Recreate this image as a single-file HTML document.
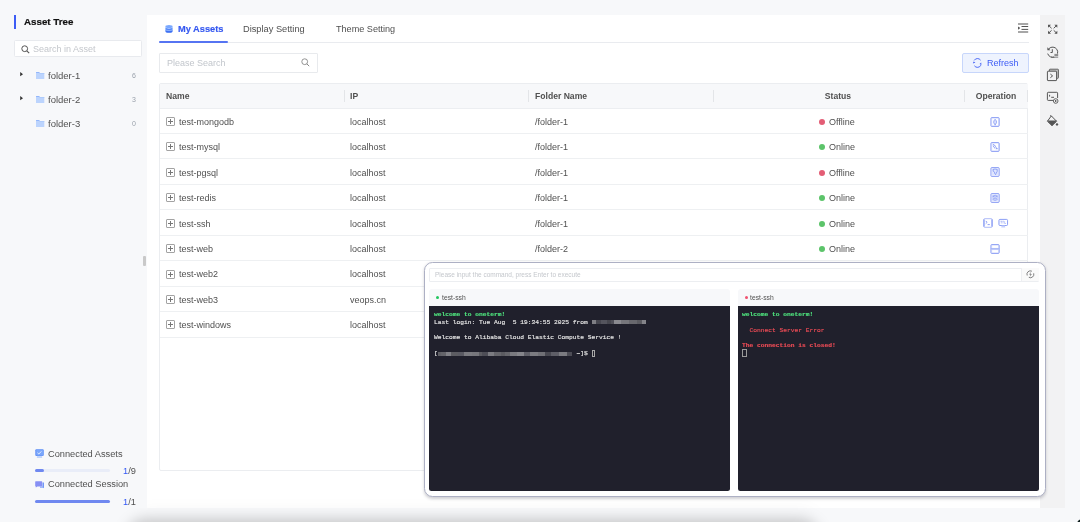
<!DOCTYPE html>
<html><head><meta charset="utf-8"><style>
*{margin:0;padding:0;box-sizing:border-box}
html,body{width:1080px;height:522px;overflow:hidden}
body{background:#f7f8fa;font-family:"Liberation Sans",sans-serif;position:relative;color:#505050;-webkit-font-smoothing:antialiased}
.a{position:absolute}
.t{position:absolute;white-space:nowrap;line-height:12px;will-change:transform}
svg{position:absolute;overflow:visible}
.term{position:absolute;font-family:"Liberation Mono",monospace;font-size:6.25px;line-height:7.95px;white-space:pre;color:#e6e6e6;-webkit-text-stroke:0.15px currentColor;will-change:transform}
</style></head><body>
<div class="a" style="left:14px;top:15px;width:2px;height:14px;background:#3d5cf5"></div>
<div class="t" style="left:23.60px;top:15.92px;font-size:9.75px;color:#111;font-weight:bold;-webkit-text-stroke:0.2px #111;">Asset Tree</div>
<div class="a" style="left:13.7px;top:40px;width:127.9px;height:16.6px;background:#fff;border:1px solid #e8eaee;border-radius:1.5px"></div>
<svg style="left:21px;top:44.6px" width="9" height="9" viewBox="0 0 9 9"><circle cx="3.7" cy="3.7" r="2.9" fill="none" stroke="#555" stroke-width="1"/><path d="M5.8 5.8L8.2 8.2" stroke="#555" stroke-width="1.1"/></svg>
<div class="t" style="left:33.10px;top:42.68px;font-size:9px;color:#c4c7cc;">Search in Asset</div>
<svg style="left:19.6px;top:72.00px" width="4" height="5" viewBox="0 0 4 5"><path d="M0.2 0.1L3 2.2L0.2 4.3Z" fill="#333"/></svg>
<svg style="left:35.6px;top:72.20px" width="9" height="8" viewBox="0 0 9 8"><rect x="0" y="0" width="3.6" height="1.4" rx="0.3" fill="#92b6fb"/><path d="M0 0.9H8.3V7Q8.3 7 8 7H0.3Q0 7 0 6.7Z" fill="#bcd4fd"/><rect x="3.4" y="1" width="4.9" height="0.8" fill="#aac8fb"/></svg>
<div class="t" style="left:47.60px;top:69.71px;font-size:9.5px;color:#505050;">folder-1</div>
<div class="t" style="right:944.20px;top:69.97px;font-size:7px;color:#9aa1ab;">6</div>
<svg style="left:19.6px;top:96.05px" width="4" height="5" viewBox="0 0 4 5"><path d="M0.2 0.1L3 2.2L0.2 4.3Z" fill="#333"/></svg>
<svg style="left:35.6px;top:96.25px" width="9" height="8" viewBox="0 0 9 8"><rect x="0" y="0" width="3.6" height="1.4" rx="0.3" fill="#92b6fb"/><path d="M0 0.9H8.3V7Q8.3 7 8 7H0.3Q0 7 0 6.7Z" fill="#bcd4fd"/><rect x="3.4" y="1" width="4.9" height="0.8" fill="#aac8fb"/></svg>
<div class="t" style="left:47.60px;top:93.76px;font-size:9.5px;color:#505050;">folder-2</div>
<div class="t" style="right:944.20px;top:94.02px;font-size:7px;color:#9aa1ab;">3</div>
<svg style="left:35.6px;top:120.30px" width="9" height="8" viewBox="0 0 9 8"><rect x="0" y="0" width="3.6" height="1.4" rx="0.3" fill="#92b6fb"/><path d="M0 0.9H8.3V7Q8.3 7 8 7H0.3Q0 7 0 6.7Z" fill="#bcd4fd"/><rect x="3.4" y="1" width="4.9" height="0.8" fill="#aac8fb"/></svg>
<div class="t" style="left:47.60px;top:117.81px;font-size:9.5px;color:#505050;">folder-3</div>
<div class="t" style="right:944.20px;top:118.07px;font-size:7px;color:#9aa1ab;">0</div>
<svg style="left:35px;top:449px" width="9" height="9" viewBox="0 0 9 9"><rect x="0.3" y="0.3" width="8.4" height="6.6" rx="1" fill="#5f8ef5"/><rect x="1.2" y="0.8" width="7.5" height="5.6" rx="0.8" fill="#7aa6fb"/><path d="M2.5 3.8L3.8 5L6.3 2.4" fill="none" stroke="#fff" stroke-width="0.8"/><rect x="1.8" y="7.4" width="5.4" height="1.2" rx="0.5" fill="#8fb1f8"/></svg>
<div class="t" style="left:48.40px;top:447.59px;font-size:9.25px;color:#505050;">Connected Assets</div>
<div class="a" style="left:35.3px;top:469.2px;width:75.2px;height:3px;background:#e9edf8;border-radius:2px"></div>
<div class="a" style="left:35.3px;top:469.2px;width:8.5px;height:3px;background:#6f88f0;border-radius:2px"></div>
<div class="t" style="right:944.50px;top:464.79px;font-size:9.25px;color:#505050;"><span style="color:#3358f5">1</span>/9</div>
<svg style="left:35px;top:480.5px" width="9" height="8" viewBox="0 0 9 8"><path d="M0.2 0.8Q0.2 0.2 0.8 0.2H6.6Q7.2 0.2 7.2 0.8V4.8Q7.2 5.4 6.6 5.4H2.4L0.8 6.6V5.4Q0.2 5.4 0.2 4.8Z" fill="#8790f4"/><path d="M7.6 1.6H8.8V7.2L7.8 6.4H5V5.8H7.6Z" fill="#4f7ef5"/></svg><div class="t" style="left:48.40px;top:477.99px;font-size:9.25px;color:#505050;">Connected Session</div>
<div class="a" style="left:35.3px;top:499.6px;width:75.2px;height:3.2px;background:#6f88f0;border-radius:2px"></div>
<div class="t" style="right:944.50px;top:495.59px;font-size:9.25px;color:#505050;"><span style="color:#3358f5">1</span>/1</div>
<div class="a" style="left:143px;top:256px;width:3px;height:10px;background:#c9c9c9;border-radius:1px"></div>
<div class="a" style="left:147px;top:15px;width:893px;height:493px;background:#fff"></div>
<div class="a" style="left:1040px;top:15px;width:25px;height:493px;background:#f2f2f3"></div>
<svg style="left:164.8px;top:24.8px" width="8" height="8" viewBox="0 0 8 8"><defs><linearGradient id="g1" x1="0" y1="0" x2="0" y2="1"><stop offset="0" stop-color="#6ea2ff"/><stop offset="1" stop-color="#2f63f0"/></linearGradient></defs><ellipse cx="4" cy="1.6" rx="3.6" ry="1.5" fill="#79a8ff"/><path d="M0.4 1.8V6.2Q0.4 7.8 4 7.8Q7.6 7.8 7.6 6.2V1.8Q7.6 3.4 4 3.4Q0.4 3.4 0.4 1.8Z" fill="url(#g1)"/><path d="M0.4 4.2Q0.4 5.6 4 5.6Q7.6 5.6 7.6 4.2" fill="none" stroke="#b9d3ff" stroke-width="0.6"/></svg>
<div class="t" style="left:177.90px;top:22.79px;font-size:9.25px;color:#3558f0;font-weight:bold;-webkit-text-stroke:0.15px #3558f0;">My Assets</div>
<div class="t" style="left:243.30px;top:23.09px;font-size:9.25px;color:#505050;">Display Setting</div>
<div class="t" style="left:335.70px;top:23.15px;font-size:9.1px;color:#505050;">Theme Setting</div>
<div class="a" style="left:159px;top:42px;width:869.5px;height:1px;background:#e9ebef"></div>
<div class="a" style="left:159px;top:41px;width:68.8px;height:2px;background:#5674f2;border-radius:1px"></div>
<svg style="left:1017.7px;top:23px" width="11" height="11" viewBox="0 0 11 11"><path d="M0 0.9H10.2M0 9.1H10.2" stroke="#8a8a8a" stroke-width="1.5"/><path d="M3.5 3.5H10.2M3.5 6.4H10.2" stroke="#555" stroke-width="1"/><path d="M0.1 3.5L2.2 5.1L0.1 6.7Z" fill="#444"/></svg><div class="a" style="left:159px;top:53px;width:158.7px;height:19.8px;background:#fff;border:1px solid #e8eaed;border-radius:1px"></div>
<div class="t" style="left:166.70px;top:57.18px;font-size:9px;color:#c2c6cc;">Please Search</div>
<svg style="left:300.9px;top:57.9px" width="9" height="9" viewBox="0 0 9 9"><circle cx="3.7" cy="3.7" r="2.9" fill="none" stroke="#888" stroke-width="0.9"/><path d="M5.8 5.8L8.2 8.2" stroke="#888" stroke-width="1"/></svg>
<div class="a" style="left:962.2px;top:53px;width:66.6px;height:19.9px;background:#eef3fe;border:1px solid #c7d6fb;border-radius:2px"></div>
<svg style="left:968px;top:54px" width="22" height="18" viewBox="0 0 22 18"><path d="M6.2 6.4A3.8 3.8 0 0 1 12.6 6.2M12.9 11.2A3.8 3.8 0 0 1 6.4 11.8" fill="none" stroke="#3d5cf5" stroke-width="0.9"/><path d="M4.9 9.6L5.6 7.4L7.4 8.6Z" fill="#3d5cf5"/><path d="M13.2 8.6L13.4 11L11.6 10Z" fill="#3d5cf5"/></svg>
<div class="t" style="left:986.70px;top:56.88px;font-size:9px;color:#3d5cf5;">Refresh</div>
<div class="a" style="left:159px;top:83px;width:869.3px;height:388.4px;border:1px solid #ebedf0;border-radius:2px"></div>
<div class="a" style="left:159.5px;top:83.5px;width:868.3px;height:25px;background:#f7f8fa;border-bottom:1px solid #eceef1"></div>
<div class="t" style="left:165.90px;top:90.22px;font-size:8.6px;color:#505050;font-weight:bold;">Name</div>
<div class="t" style="left:349.60px;top:90.22px;font-size:8.6px;color:#505050;font-weight:bold;">IP</div>
<div class="t" style="left:534.60px;top:90.22px;font-size:8.6px;color:#505050;font-weight:bold;">Folder Name</div>
<div class="t" style="left:738.30px;width:200px;text-align:center;top:90.22px;font-size:8.6px;color:#505050;font-weight:bold;">Status</div>
<div class="t" style="left:895.80px;width:200px;text-align:center;top:90.22px;font-size:8.6px;color:#505050;font-weight:bold;">Operation</div>
<div class="a" style="left:343.5px;top:90.3px;width:1px;height:12.2px;background:#e3e5e8"></div>
<div class="a" style="left:528.1px;top:90.3px;width:1px;height:12.2px;background:#e3e5e8"></div>
<div class="a" style="left:712.5px;top:90.3px;width:1px;height:12.2px;background:#e3e5e8"></div>
<div class="a" style="left:964.4px;top:90.3px;width:1px;height:12.2px;background:#e3e5e8"></div>
<div class="a" style="left:1027.3px;top:90.3px;width:1px;height:12.2px;background:#e3e5e8"></div>
<div class="a" style="left:159.5px;top:133.04px;width:868px;height:1px;background:#eef0f2"></div>
<div class="a" style="left:166px;top:117px;width:9px;height:9px;border:1px solid #a3a3a3;border-radius:1px"></div>
<div class="a" style="left:168px;top:121px;width:5px;height:1px;background:#777"></div>
<div class="a" style="left:170px;top:119px;width:1px;height:5px;background:#777"></div>
<div class="t" style="left:178.50px;top:115.80px;font-size:9px;color:#505050;">test-mongodb</div>
<div class="t" style="left:349.80px;top:115.80px;font-size:9px;color:#505050;">localhost</div>
<div class="t" style="left:534.60px;top:115.80px;font-size:9px;color:#505050;">/folder-1</div>
<div class="a" style="left:819px;top:118.82px;width:6px;height:6px;background:#e35d75;border-radius:50%"></div>
<div class="t" style="left:828.80px;top:115.80px;font-size:9px;color:#505050;">Offline</div>
<svg style="left:990.1px;top:116.52px" width="10" height="10" viewBox="0 0 10 10"><rect x="1" y="0.7" width="8.1" height="8.6" rx="0.6" fill="none" stroke="#6f87f2" stroke-width="0.9"/><rect x="1" y="1.6" width="1.1" height="7.2" fill="#c5cffb"/><path d="M5.1 2.3Q6.7 3.8 6.5 5.3Q6.2 6.8 5.1 7.5Q4 6.8 3.7 5.3Q3.5 3.8 5.1 2.3Z" fill="#dfe5fd" stroke="#6f87f2" stroke-width="0.7"/><path d="M5.1 6.8V8.3" stroke="#6f87f2" stroke-width="0.8"/></svg>
<div class="a" style="left:159.5px;top:158.48px;width:868px;height:1px;background:#eef0f2"></div>
<div class="a" style="left:166px;top:142px;width:9px;height:9px;border:1px solid #a3a3a3;border-radius:1px"></div>
<div class="a" style="left:168px;top:146px;width:5px;height:1px;background:#777"></div>
<div class="a" style="left:170px;top:144px;width:1px;height:5px;background:#777"></div>
<div class="t" style="left:178.50px;top:141.24px;font-size:9px;color:#505050;">test-mysql</div>
<div class="t" style="left:349.80px;top:141.24px;font-size:9px;color:#505050;">localhost</div>
<div class="t" style="left:534.60px;top:141.24px;font-size:9px;color:#505050;">/folder-1</div>
<div class="a" style="left:819px;top:144.26px;width:6px;height:6px;background:#5cc46a;border-radius:50%"></div>
<div class="t" style="left:828.80px;top:141.24px;font-size:9px;color:#505050;">Online</div>
<svg style="left:990.1px;top:141.96px" width="10" height="10" viewBox="0 0 10 10"><rect x="1" y="0.7" width="8.1" height="8.6" rx="0.6" fill="none" stroke="#6f87f2" stroke-width="0.9"/><rect x="1" y="1.6" width="1.1" height="7.2" fill="#c5cffb"/><path d="M2.8 2.4Q4.8 2.6 5.6 4.6Q6.2 6 7 6.8M3.2 3.6Q3.8 5.6 5.3 6.6" fill="none" stroke="#6f87f2" stroke-width="0.8"/><circle cx="6.9" cy="6.7" r="0.6" fill="#6f87f2"/></svg>
<div class="a" style="left:159.5px;top:183.92px;width:868px;height:1px;background:#eef0f2"></div>
<div class="a" style="left:166px;top:168px;width:9px;height:9px;border:1px solid #a3a3a3;border-radius:1px"></div>
<div class="a" style="left:168px;top:172px;width:5px;height:1px;background:#777"></div>
<div class="a" style="left:170px;top:170px;width:1px;height:5px;background:#777"></div>
<div class="t" style="left:178.50px;top:166.68px;font-size:9px;color:#505050;">test-pgsql</div>
<div class="t" style="left:349.80px;top:166.68px;font-size:9px;color:#505050;">localhost</div>
<div class="t" style="left:534.60px;top:166.68px;font-size:9px;color:#505050;">/folder-1</div>
<div class="a" style="left:819px;top:169.7px;width:6px;height:6px;background:#e35d75;border-radius:50%"></div>
<div class="t" style="left:828.80px;top:166.68px;font-size:9px;color:#505050;">Offline</div>
<svg style="left:990.1px;top:167.40px" width="10" height="10" viewBox="0 0 10 10"><rect x="1" y="0.7" width="8.1" height="8.6" rx="0.6" fill="none" stroke="#6f87f2" stroke-width="0.9"/><rect x="1" y="1.6" width="1.1" height="7.2" fill="#c5cffb"/><rect x="2" y="1.6" width="6.2" height="6.6" fill="#dfe5fd"/><path d="M3 2.4Q5 1.6 7.2 2.4Q7.6 4.6 6.2 6.2L5.6 7.6Q4.4 6.8 4.6 5.2Q2.8 4.8 3 2.4Z" fill="none" stroke="#6f87f2" stroke-width="0.7"/></svg>
<div class="a" style="left:159.5px;top:209.36px;width:868px;height:1px;background:#eef0f2"></div>
<div class="a" style="left:166px;top:193px;width:9px;height:9px;border:1px solid #a3a3a3;border-radius:1px"></div>
<div class="a" style="left:168px;top:197px;width:5px;height:1px;background:#777"></div>
<div class="a" style="left:170px;top:195px;width:1px;height:5px;background:#777"></div>
<div class="t" style="left:178.50px;top:192.12px;font-size:9px;color:#505050;">test-redis</div>
<div class="t" style="left:349.80px;top:192.12px;font-size:9px;color:#505050;">localhost</div>
<div class="t" style="left:534.60px;top:192.12px;font-size:9px;color:#505050;">/folder-1</div>
<div class="a" style="left:819px;top:195.14000000000001px;width:6px;height:6px;background:#5cc46a;border-radius:50%"></div>
<div class="t" style="left:828.80px;top:192.12px;font-size:9px;color:#505050;">Online</div>
<svg style="left:990.1px;top:192.84px" width="10" height="10" viewBox="0 0 10 10"><rect x="1" y="0.7" width="8.1" height="8.6" rx="0.6" fill="none" stroke="#6f87f2" stroke-width="0.9"/><rect x="1" y="1.6" width="1.1" height="7.2" fill="#c5cffb"/><rect x="2" y="1.6" width="6.2" height="6.6" fill="#dfe5fd"/><path d="M2.6 3.2L5.1 2.2L7.6 3.2L5.1 4.2ZM2.6 4.9L5.1 5.9L7.6 4.9M2.6 6.4L5.1 7.4L7.6 6.4" fill="none" stroke="#6f87f2" stroke-width="0.6"/></svg>
<div class="a" style="left:159.5px;top:234.8px;width:868px;height:1px;background:#eef0f2"></div>
<div class="a" style="left:166px;top:219px;width:9px;height:9px;border:1px solid #a3a3a3;border-radius:1px"></div>
<div class="a" style="left:168px;top:223px;width:5px;height:1px;background:#777"></div>
<div class="a" style="left:170px;top:221px;width:1px;height:5px;background:#777"></div>
<div class="t" style="left:178.50px;top:217.56px;font-size:9px;color:#505050;">test-ssh</div>
<div class="t" style="left:349.80px;top:217.56px;font-size:9px;color:#505050;">localhost</div>
<div class="t" style="left:534.60px;top:217.56px;font-size:9px;color:#505050;">/folder-1</div>
<div class="a" style="left:819px;top:220.58px;width:6px;height:6px;background:#5cc46a;border-radius:50%"></div>
<div class="t" style="left:828.80px;top:217.56px;font-size:9px;color:#505050;">Online</div>
<svg style="left:983.2px;top:218.28px" width="10" height="10" viewBox="0 0 10 10"><rect x="0.95" y="0.7" width="8.1" height="8.6" rx="0.6" fill="none" stroke="#a6b4f7" stroke-width="0.9"/><path d="M0.95 1.4V8.6M9.05 1.4V8.6" stroke="#6f87f2" stroke-width="0.9"/><path d="M2.7 2.9L4.1 4.3L2.7 5.7M4.6 6.6H6.8" fill="none" stroke="#6f87f2" stroke-width="0.8"/></svg>
<svg style="left:997.6px;top:218.28px" width="11" height="10" viewBox="0 0 11 10"><rect x="0.95" y="1.4" width="8.6" height="6.1" rx="1" fill="none" stroke="#6f87f2" stroke-width="0.8"/><rect x="0.95" y="2.2" width="1" height="4.6" fill="#c5cffb"/><path d="M3.6 7.6H6.9L7.3 9.4H3.2Z" fill="#c5cffb"/><path d="M2.4 3.2H4.2M3.3 3.2V5.5M5 3.2V5.5M4.6 3.2H5.9M6.6 3.2V5.5H8" fill="none" stroke="#8fa0f5" stroke-width="0.55"/></svg>
<div class="a" style="left:159.5px;top:260.24px;width:868px;height:1px;background:#eef0f2"></div>
<div class="a" style="left:166px;top:244px;width:9px;height:9px;border:1px solid #a3a3a3;border-radius:1px"></div>
<div class="a" style="left:168px;top:248px;width:5px;height:1px;background:#777"></div>
<div class="a" style="left:170px;top:246px;width:1px;height:5px;background:#777"></div>
<div class="t" style="left:178.50px;top:243.00px;font-size:9px;color:#505050;">test-web</div>
<div class="t" style="left:349.80px;top:243.00px;font-size:9px;color:#505050;">localhost</div>
<div class="t" style="left:534.60px;top:243.00px;font-size:9px;color:#505050;">/folder-2</div>
<div class="a" style="left:819px;top:246.02px;width:6px;height:6px;background:#5cc46a;border-radius:50%"></div>
<div class="t" style="left:828.80px;top:243.00px;font-size:9px;color:#505050;">Online</div>
<svg style="left:990.1px;top:243.72px" width="10" height="10" viewBox="0 0 10 10"><rect x="1" y="0.7" width="8.1" height="8.6" rx="0.6" fill="none" stroke="#6f87f2" stroke-width="0.9"/><rect x="1" y="1.6" width="1.1" height="7.2" fill="#c5cffb"/><rect x="1.4" y="3.9" width="7.2" height="2.2" fill="#dde3fc"/><path d="M0.95 4.9H9.05" stroke="#6f87f2" stroke-width="0.7"/></svg>
<div class="a" style="left:159.5px;top:285.68px;width:868px;height:1px;background:#eef0f2"></div>
<div class="a" style="left:166px;top:270px;width:9px;height:9px;border:1px solid #a3a3a3;border-radius:1px"></div>
<div class="a" style="left:168px;top:274px;width:5px;height:1px;background:#777"></div>
<div class="a" style="left:170px;top:272px;width:1px;height:5px;background:#777"></div>
<div class="t" style="left:178.50px;top:268.44px;font-size:9px;color:#505050;">test-web2</div>
<div class="t" style="left:349.80px;top:268.44px;font-size:9px;color:#505050;">localhost</div>
<div class="t" style="left:534.60px;top:268.44px;font-size:9px;color:#505050;">/folder-2</div>
<div class="a" style="left:819px;top:271.46000000000004px;width:6px;height:6px;background:#5cc46a;border-radius:50%"></div>
<div class="t" style="left:828.80px;top:268.44px;font-size:9px;color:#505050;">Online</div>
<svg style="left:990.1px;top:269.16px" width="10" height="10" viewBox="0 0 10 10"><rect x="1" y="0.7" width="8.1" height="8.6" rx="0.6" fill="none" stroke="#6f87f2" stroke-width="0.9"/><rect x="1" y="1.6" width="1.1" height="7.2" fill="#c5cffb"/><rect x="1.4" y="3.9" width="7.2" height="2.2" fill="#dde3fc"/><path d="M0.95 4.9H9.05" stroke="#6f87f2" stroke-width="0.7"/></svg>
<div class="a" style="left:159.5px;top:311.12px;width:868px;height:1px;background:#eef0f2"></div>
<div class="a" style="left:166px;top:295px;width:9px;height:9px;border:1px solid #a3a3a3;border-radius:1px"></div>
<div class="a" style="left:168px;top:299px;width:5px;height:1px;background:#777"></div>
<div class="a" style="left:170px;top:297px;width:1px;height:5px;background:#777"></div>
<div class="t" style="left:178.50px;top:293.88px;font-size:9px;color:#505050;">test-web3</div>
<div class="t" style="left:349.80px;top:293.88px;font-size:9px;color:#505050;">veops.cn</div>
<div class="t" style="left:534.60px;top:293.88px;font-size:9px;color:#505050;">/folder-2</div>
<div class="a" style="left:819px;top:296.90000000000003px;width:6px;height:6px;background:#5cc46a;border-radius:50%"></div>
<div class="t" style="left:828.80px;top:293.88px;font-size:9px;color:#505050;">Online</div>
<svg style="left:990.1px;top:294.60px" width="10" height="10" viewBox="0 0 10 10"><rect x="1" y="0.7" width="8.1" height="8.6" rx="0.6" fill="none" stroke="#6f87f2" stroke-width="0.9"/><rect x="1" y="1.6" width="1.1" height="7.2" fill="#c5cffb"/><rect x="1.4" y="3.9" width="7.2" height="2.2" fill="#dde3fc"/><path d="M0.95 4.9H9.05" stroke="#6f87f2" stroke-width="0.7"/></svg>
<div class="a" style="left:159.5px;top:336.56px;width:868px;height:1px;background:#eef0f2"></div>
<div class="a" style="left:166px;top:320px;width:9px;height:9px;border:1px solid #a3a3a3;border-radius:1px"></div>
<div class="a" style="left:168px;top:324px;width:5px;height:1px;background:#777"></div>
<div class="a" style="left:170px;top:322px;width:1px;height:5px;background:#777"></div>
<div class="t" style="left:178.50px;top:319.32px;font-size:9px;color:#505050;">test-windows</div>
<div class="t" style="left:349.80px;top:319.32px;font-size:9px;color:#505050;">localhost</div>
<div class="t" style="left:534.60px;top:319.32px;font-size:9px;color:#505050;">/folder-3</div>
<div class="a" style="left:819px;top:322.34000000000003px;width:6px;height:6px;background:#5cc46a;border-radius:50%"></div>
<div class="t" style="left:828.80px;top:319.32px;font-size:9px;color:#505050;">Online</div>
<svg style="left:990.1px;top:320.04px" width="10" height="10" viewBox="0 0 10 10"><rect x="1" y="0.7" width="8.1" height="8.6" rx="0.6" fill="none" stroke="#6f87f2" stroke-width="0.9"/><rect x="1" y="1.6" width="1.1" height="7.2" fill="#c5cffb"/><path d="M2.6 2.9L4.7 2.6V4.8H2.6ZM5.3 2.5L7.6 2.2V4.8H5.3ZM2.6 5.3H4.7V7.4L2.6 7.1ZM5.3 5.3H7.6V7.8L5.3 7.5Z" fill="#6f87f2"/></svg>
<svg style="left:1044px;top:20px" width="18" height="18" viewBox="0 0 18 18"><g fill="#555555"><path d="M4 4.8H7L4 7.8Z"/><path d="M13.3 4.8H10.3L13.3 7.8Z"/><path d="M4 13.8H7L4 10.8Z"/><path d="M13.3 13.8H10.3L13.3 10.8Z"/></g><path d="M5 5.8L7.6 8.3M12.3 5.8L9.7 8.3M5 12.8L7.6 10.3M12.3 12.8L9.7 10.3" stroke="#555555" stroke-width="1"/></svg>
<svg style="left:1044px;top:44px" width="18" height="18" viewBox="0 0 18 18"><path d="M5 4.6A5.1 5.1 0 1 1 3.7 9.6" fill="none" stroke="#555555" stroke-width="1"/><path d="M3.4 3.2V6.2H6.4Z" fill="#555555"/><path d="M8.3 5.2V8.5H6.5" fill="none" stroke="#555555" stroke-width="1"/><rect x="10" y="9.8" width="5" height="3.6" fill="#f2f2f3"/><path d="M10.4 10.4H14.2M10.4 11.6H14.2M7 13.2H14.2" stroke="#555555" stroke-width="0.7"/></svg>
<svg style="left:1044px;top:66px" width="18" height="18" viewBox="0 0 18 18"><path d="M5.4 5V3.8Q5.4 3.2 6 3.2H13.8Q14.4 3.2 14.4 3.8V11.6Q14.4 12.3 13.8 12.3H12.8" fill="#c4c4c4" stroke="#555555" stroke-width="0.9"/><rect x="3.4" y="5.2" width="9.2" height="9.4" rx="0.6" fill="#f2f2f3" stroke="#555555" stroke-width="1"/><path d="M6.4 8.1L8.6 9.9L6.4 11.7" fill="none" stroke="#555555" stroke-width="1"/></svg>
<svg style="left:1044px;top:88px" width="18" height="18" viewBox="0 0 18 18"><path d="M9.2 12.4H4.2Q3.4 12.4 3.4 11.6V5.1Q3.4 4.3 4.2 4.3H12.8Q13.6 4.3 13.6 5.1V10" fill="none" stroke="#555555" stroke-width="1"/><path d="M5.6 6.8V8.6M7.2 9.3H10" fill="none" stroke="#555555" stroke-width="1"/><circle cx="11.7" cy="13" r="2.3" fill="#f2f2f3" stroke="#555555" stroke-width="0.9"/><rect x="11.1" y="12" width="1.2" height="2" fill="#555555"/></svg>
<svg style="left:1044px;top:108px" width="18" height="20" viewBox="0 0 18 20"><path d="M7.3 7.9L12.6 13.3L8 17.6L3.4 13.3Z" fill="none" stroke="#555555" stroke-width="1"/><path d="M3.2 12.6H12.9L8 17.9Z" fill="#555555"/><path d="M6.4 7.2L7.6 8.4" stroke="#555555" stroke-width="1"/><circle cx="13" cy="16.4" r="1.2" fill="#555555"/></svg>
<div class="a" style="left:423.7px;top:262px;width:622px;height:235px;background:#fff;border:1px solid #adb0c4;border-radius:8.5px;box-shadow:0 1.5px 3px rgba(40,40,60,0.22)"></div>
<div class="a" style="left:429.3px;top:267.5px;width:609.7px;height:14.2px;background:#fff;border:1px solid #eceef1;border-radius:1px"></div>
<div class="a" style="left:1021.2px;top:268.2px;width:17.6px;height:13px;background:#fafafa;border-left:1px solid #eeeff2"></div>
<svg style="left:1025.5px;top:270px" width="9" height="9" viewBox="0 0 9 9"><path d="M5.9 1.2A3.4 3.4 0 0 0 1.2 5.5M2.8 7.3A3.4 3.4 0 0 0 7.7 3.3" fill="none" stroke="#6a6a6a" stroke-width="0.85"/><path d="M5 1.8L3.1 4.6H4.5L3.7 6.9L5.8 4H4.4Z" fill="#777"/></svg><div class="t" style="left:434.70px;top:269.05px;font-size:6.5px;color:#c4c7cc;">Please input the command, press Enter to execute</div>
<div class="a" style="left:429.3px;top:289.2px;width:300.6px;height:16.8px;background:#f7f8fa;border-radius:3px 3px 0 0"></div>
<div class="a" style="left:429.3px;top:305.8px;width:300.6px;height:185.4px;background:#20202c;border-radius:0 0 2.5px 2.5px"></div>
<div class="a" style="left:435.8px;top:296px;width:3.2px;height:3.2px;background:#22c55e;border-radius:50%"></div>
<div class="t" style="left:441.50px;top:291.86px;font-size:6.75px;color:#505050;">test-ssh</div>
<div class="a" style="left:738.2px;top:289.2px;width:300.8px;height:16.8px;background:#f7f8fa;border-radius:3px 3px 0 0"></div>
<div class="a" style="left:738.2px;top:305.8px;width:300.8px;height:185.4px;background:#20202c;border-radius:0 0 2.5px 2.5px"></div>
<div class="a" style="left:744.7px;top:296px;width:3.2px;height:3.2px;background:#f0506e;border-radius:50%"></div>
<div class="t" style="left:750.40px;top:291.86px;font-size:6.75px;color:#505050;">test-ssh</div>
<div class="term" style="left:433.8px;top:310.58px;height:7.7px"><b style="color:#4fe37e">welcome to oneterm!</b></div>
<div class="term" style="left:433.8px;top:318.55px;height:7.7px">Last login: Tue Aug  5 19:34:55 2025 from </div>
<div class="term" style="left:433.8px;top:334.49px;height:7.7px">Welcome to Alibaba Cloud Elastic Compute Service !</div>
<div class="term" style="left:433.8px;top:350.43px;height:7.7px">[                                     ~]$ </div>
<div class="a" style="left:0;top:0;filter:blur(0.45px)"><div class="a" style="left:591.8px;top:320.2px;width:4px;height:3.8000000000000114px;background:rgba(126,126,132,1)"></div>
<div class="a" style="left:595.8px;top:320.2px;width:5px;height:3.8000000000000114px;background:rgba(97,97,103,0.6)"></div>
<div class="a" style="left:600.8px;top:320.2px;width:6px;height:3.8000000000000114px;background:rgba(120,120,126,0.6)"></div>
<div class="a" style="left:606.8px;top:320.2px;width:4px;height:3.8000000000000114px;background:rgba(96,96,102,0.6)"></div>
<div class="a" style="left:610.8px;top:320.2px;width:3px;height:3.8000000000000114px;background:rgba(114,114,120,0.6)"></div>
<div class="a" style="left:613.8px;top:320.2px;width:7px;height:3.8000000000000114px;background:rgba(138,138,144,1)"></div>
<div class="a" style="left:620.8px;top:320.2px;width:8px;height:3.8000000000000114px;background:rgba(118,118,124,1)"></div>
<div class="a" style="left:628.8px;top:320.2px;width:8px;height:3.8000000000000114px;background:rgba(104,104,110,1)"></div>
<div class="a" style="left:636.8px;top:320.2px;width:5px;height:3.8000000000000114px;background:rgba(91,91,97,1)"></div>
<div class="a" style="left:641.8px;top:320.2px;width:3px;height:3.8000000000000114px;background:rgba(131,131,137,1)"></div>
<div class="a" style="left:644.8px;top:320.2px;width:0.2px;height:3.8000000000000114px;background:rgba(133,133,139,1)"></div>
</div><div class="a" style="left:0;top:0;filter:blur(0.45px)"><div class="a" style="left:437.6px;top:352.2px;width:3px;height:3.8000000000000114px;background:rgba(95,95,101,1)"></div>
<div class="a" style="left:440.6px;top:352.2px;width:5px;height:3.8000000000000114px;background:rgba(100,100,106,1)"></div>
<div class="a" style="left:445.6px;top:352.2px;width:5px;height:3.8000000000000114px;background:rgba(128,128,134,1)"></div>
<div class="a" style="left:450.6px;top:352.2px;width:7px;height:3.8000000000000114px;background:rgba(92,92,98,1)"></div>
<div class="a" style="left:457.6px;top:352.2px;width:6px;height:3.8000000000000114px;background:rgba(130,130,136,0.6)"></div>
<div class="a" style="left:463.6px;top:352.2px;width:8px;height:3.8000000000000114px;background:rgba(122,122,128,1)"></div>
<div class="a" style="left:471.6px;top:352.2px;width:7px;height:3.8000000000000114px;background:rgba(118,118,124,1)"></div>
<div class="a" style="left:478.6px;top:352.2px;width:3px;height:3.8000000000000114px;background:rgba(91,91,97,1)"></div>
<div class="a" style="left:481.6px;top:352.2px;width:6px;height:3.8000000000000114px;background:rgba(110,110,116,0.6)"></div>
<div class="a" style="left:487.6px;top:352.2px;width:6px;height:3.8000000000000114px;background:rgba(123,123,129,1)"></div>
<div class="a" style="left:493.6px;top:352.2px;width:7px;height:3.8000000000000114px;background:rgba(101,101,107,1)"></div>
<div class="a" style="left:500.6px;top:352.2px;width:4px;height:3.8000000000000114px;background:rgba(91,91,97,1)"></div>
<div class="a" style="left:504.6px;top:352.2px;width:5px;height:3.8000000000000114px;background:rgba(101,101,107,1)"></div>
<div class="a" style="left:509.6px;top:352.2px;width:7px;height:3.8000000000000114px;background:rgba(122,122,128,1)"></div>
<div class="a" style="left:516.6px;top:352.2px;width:7px;height:3.8000000000000114px;background:rgba(133,133,139,1)"></div>
<div class="a" style="left:523.6px;top:352.2px;width:6px;height:3.8000000000000114px;background:rgba(140,140,146,0.6)"></div>
<div class="a" style="left:529.6px;top:352.2px;width:8px;height:3.8000000000000114px;background:rgba(123,123,129,1)"></div>
<div class="a" style="left:537.6px;top:352.2px;width:7px;height:3.8000000000000114px;background:rgba(112,112,118,1)"></div>
<div class="a" style="left:544.6px;top:352.2px;width:6px;height:3.8000000000000114px;background:rgba(100,100,106,0.6)"></div>
<div class="a" style="left:550.6px;top:352.2px;width:8px;height:3.8000000000000114px;background:rgba(137,137,143,0.6)"></div>
<div class="a" style="left:558.6px;top:352.2px;width:8px;height:3.8000000000000114px;background:rgba(123,123,129,1)"></div>
<div class="a" style="left:566.6px;top:352.2px;width:5.8px;height:3.8000000000000114px;background:rgba(107,107,113,0.6)"></div>
</div><div class="a" style="left:591.5px;top:349.7px;width:3.8px;height:7px;border:0.8px solid #a8a8a8"></div>
<div class="term" style="left:742.4px;top:310.58px;height:7.7px"><b style="color:#4fe37e">welcome to oneterm!</b></div>
<div class="term" style="left:742.4px;top:326.52px;height:7.7px"><span style="color:#ef4c56">  Connect Server Error</span></div>
<div class="term" style="left:742.4px;top:342.46px;height:7.7px"><b style="color:#ef4c56">The connection is closed!</b></div>
<div class="a" style="left:742.3px;top:349.4px;width:4.4px;height:7.4px;border:0.8px solid #9a9a9a"></div>
<div class="a" style="left:1076.5px;top:518.5px;width:10px;height:10px;background:#10201e;border-radius:50%"></div>
<div class="a" style="left:0;top:508px;width:1080px;height:14px;overflow:hidden"><div class="a" style="left:126px;top:11px;width:694px;height:40px;border-radius:20px;background:rgba(0,0,0,0.2);filter:blur(7px)"></div></div>
<div class="a" style="left:147px;top:490px;width:893px;height:18px;overflow:hidden"><div class="a" style="left:-10px;top:22px;width:680px;height:30px;border-radius:15px;background:rgba(0,0,40,0.05);filter:blur(8px)"></div></div>
</body></html>
